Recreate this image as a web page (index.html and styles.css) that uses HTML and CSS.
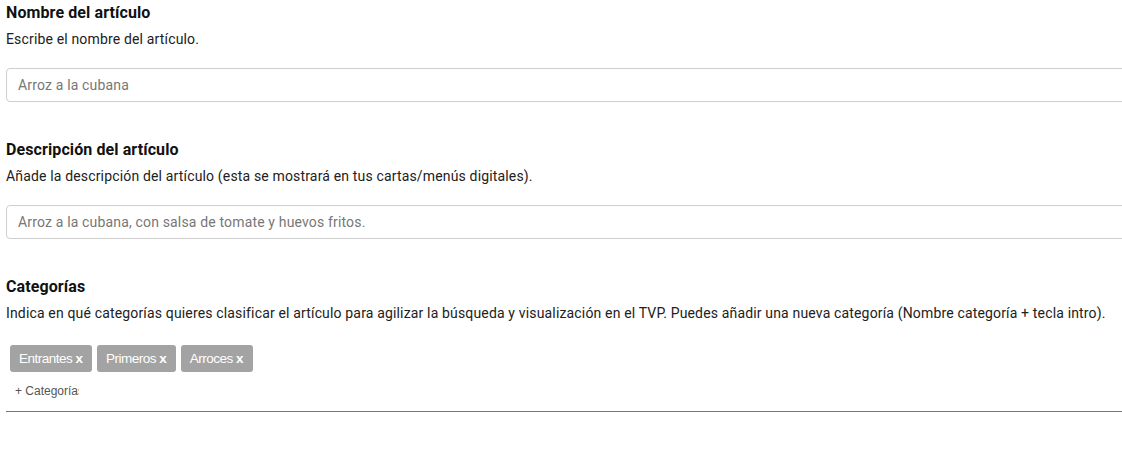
FILE: index.html
```html
<!DOCTYPE html>
<html>
<head>
  <meta name="viewport" content="width=device-width, initial-scale=1.0">
  <title>Artículo</title>
  <link rel="stylesheet" href="styles.css">
</head>
<body>
  <form class="article-form">
    <div class="field">
      <label class="field-title" for="nombre">Nombre del artículo</label>
      <p class="field-help">Escribe el nombre del artículo.</p>
      <input class="text-input" type="text" id="nombre" placeholder="Arroz a la cubana">
    </div>

    <div class="field">
      <label class="field-title" for="desc">Descripción del artículo</label>
      <p class="field-help">Añade la descripción del artículo (esta se mostrará en tus cartas/menús digitales).</p>
      <input class="text-input" type="text" id="desc" placeholder="Arroz a la cubana, con salsa de tomate y huevos fritos.">
    </div>

    <div class="field">
      <label class="field-title" for="cat">Categorías</label>
      <p class="field-help">Indica en qué categorías quieres clasificar el artículo para agilizar la búsqueda y visualización en el TVP. Puedes añadir una nueva categoría (Nombre categoría + tecla intro).</p>
      <div class="tags-box">
        <div class="tags">
          <span class="tag">Entrantes <b>x</b></span>
          <span class="tag">Primeros <b>x</b></span>
          <span class="tag">Arroces <b>x</b></span>
        </div>
        <input class="tag-input" type="text" id="cat" placeholder="+ Categorías">
      </div>
    </div>
  </form>
</body>
</html>
```

FILE: styles.css
```css
  html, body {
    margin: 0;
    overflow: hidden;
  }
  body {
    font-family: Roboto, "Liberation Sans", sans-serif;
    color: #111;
    background: #fff;
    padding-left: 6px;
  }
  .field {
    padding-top: 3px;
    margin-bottom: 35px;
  }
  .field-title {
    display: block;
    font-size: 16px;
    font-weight: bold;
    line-height: 20px;
    margin-bottom: 6px;
    color: #111;
    letter-spacing: 0.1px;
  }
  .field-help {
    margin: 0 0 19px 0;
    font-size: 14px;
    line-height: 20px;
    color: #212121;
    letter-spacing: 0.16px;
  }
  .text-input {
    display: block;
    width: 1140px;
    height: 34px;
    box-sizing: border-box;
    padding: 0 11px;
    border: 1px solid #cfcfcf;
    border-radius: 4px;
    font-family: Roboto, sans-serif;
    font-size: 14px;
    letter-spacing: 0.16px;
    outline: none;
  }
  .text-input::placeholder {
    color: #777;
  }
  .tags-box {
    width: 1140px;
    border-bottom: 1px solid #777;
    padding: 3px 0 9px 4px;
  }
  .tags {
    display: flex;
    gap: 5px;
  }
  .tag {
    display: inline-block;
    height: 27px;
    line-height: 27px;
    padding: 0 9px;
    border-radius: 3px;
    background: #a3a3a3;
    color: #fff;
    font-family: "Liberation Sans", Arial, sans-serif;
    font-size: 13.5px;
    letter-spacing: -0.5px;
  }
  .tag b {
    letter-spacing: 0;
  }
  .tag-input {
    display: block;
    margin-top: 8px;
    width: 64px;
    padding: 0 0 0 5px;
    height: 22px;
    border: none;
    outline: none;
    font-family: "Liberation Sans", Arial, sans-serif;
    font-size: 12px;
  }
  .tag-input::placeholder {
    color: #555;
  }
```
